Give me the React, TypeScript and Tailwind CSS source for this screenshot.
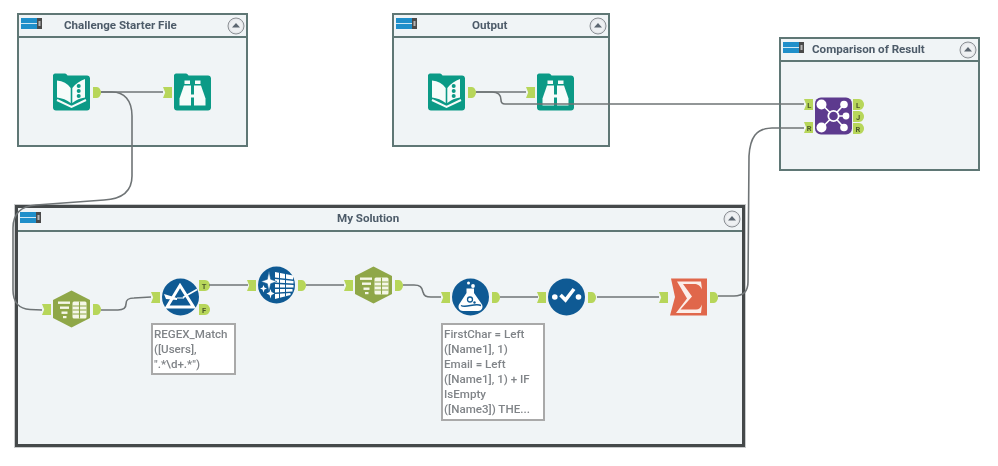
import React from "react";

const FONT = { fontFamily: 'Roboto, "Open Sans", sans-serif' };

function HeaderIcon() {
  return (
    <svg width="22" height="12" viewBox="0 0 22 12" className="shrink-0 mb-[3px]">
      <rect x="0" y="0" width="16" height="11" fill="#1f8fca" />
      <rect x="0" y="5" width="16" height="1" fill="#cfe8f5" />
      <rect x="16" y="0" width="5" height="11" fill="#4a4a4a" />
      <rect x="17.5" y="3" width="2" height="5" fill="#b5b5b5" />
    </svg>
  );
}

function CollapseButton() {
  return (
    <svg width="18" height="18" viewBox="0 0 18 18" className="shrink-0">
      <circle cx="9" cy="9" r="8" fill="#e3e5e8" stroke="#8b8f94" strokeWidth="1" />
      <circle cx="9" cy="9" r="6.5" fill="#eef0f2" />
      <path d="M9 6 L13 10.5 H5 Z" fill="#5c6670" />
    </svg>
  );
}

function Container({
  className,
  titleClass,
  title,
  headerClass,
}: {
  className: string;
  titleClass: string;
  title: string;
  headerClass: string;
}) {
  return (
    <section className={`absolute bg-[#f0f4f6] ${className}`}>
      <header className={`flex items-center pl-[2px] pr-[1px] border-b-2 border-[#5f7775] ${headerClass}`}>
        <HeaderIcon />
        <h2 className={`text-[11.6px] font-bold text-[#4d5b69] leading-none whitespace-nowrap ${titleClass}`}>{title}</h2>
        <span className="ml-auto flex">
          <CollapseButton />
        </span>
      </header>
    </section>
  );
}

function InPort({ label }: { label?: string }) {
  return (
    <svg width="9" height="11" viewBox="0 0 9 11" className="shrink-0">
      <path d="M0 0 H9 V11 H0 L2.2 5.5 Z" fill="#b7d65a" />
      {label && (
        <text x="5.2" y="8.5" fontSize="7.5" fontWeight="700" textAnchor="middle" fill="#4c5a2a" style={FONT}>
          {label}
        </text>
      )}
    </svg>
  );
}

function OutPort({ label, wide }: { label?: string; wide?: boolean }) {
  return (
    <svg width={wide ? 11 : 8} height="11" viewBox={wide ? "0 0 11 11" : "0 0 8 11"} className="shrink-0">
      <path d={wide ? "M0 0 H6 C9 0 11 3 11 5.5 C11 8 9 11 6 11 H0 Z" : "M0 0 H4 C6 0 8 3 8 5.5 C8 8 6 11 4 11 H0 Z"} fill="#b7d65a" />
      {label && (
        <text x="5" y="8.5" fontSize="7.5" fontWeight="700" textAnchor="middle" fill="#4c5a2a" style={FONT}>
          {label}
        </text>
      )}
    </svg>
  );
}

function Node({
  x,
  y,
  ins,
  outs,
  insClass = "",
  outsClass = "ml-[3px]",
  children,
}: {
  x: number;
  y: number;
  ins?: React.ReactNode;
  outs?: React.ReactNode;
  insClass?: string;
  outsClass?: string;
  children: React.ReactNode;
}) {
  return (
    <div className="absolute flex items-center" style={{ left: x, top: y }}>
      {ins !== undefined && <div className={`flex flex-col mr-[2px] ${insClass}`}>{ins}</div>}
      <svg width="37" height="38" viewBox="0 0 37 37" className="shrink-0">
        {children}
      </svg>
      {outs !== undefined && <div className={`flex flex-col ${outsClass}`}>{outs}</div>}
    </div>
  );
}

const FolderBg = () => (
  <path
    d="M2 0 H12 C13 0 14 1 14.5 2 H34 C35.7 2 37 3.3 37 5 V34 C37 35.7 35.7 37 34 37 H3 C1.3 37 0 35.7 0 34 V2 C0 1 1 0 2 0 Z"
    fill="#0b9a86"
  />
);

function BookIcon() {
  return (
    <>
      <FolderBg />
      <path d="M4 7 C10 7.5 14.5 10 17.7 14.5 V29.5 C14 26.5 9 24.5 4 24 Z" fill="#f6fcfa" />
      <path d="M19.3 14.5 C22.5 10 27.5 7 32 5.5 V24 C27.5 24.5 23 26.5 19.3 29.5 Z" fill="#f6fcfa" />
      <circle cx="25.7" cy="12.5" r="2" fill="#0b9a86" />
      <circle cx="25.7" cy="17.5" r="2" fill="#0b9a86" />
      <circle cx="25.7" cy="22.5" r="2" fill="#0b9a86" />
      <path d="M4 26.5 L18.5 33.5 L33 26.5" fill="none" stroke="#f6fcfa" strokeWidth="2" />
    </>
  );
}

function BinocularIcon() {
  return (
    <>
      <FolderBg />
      <rect x="10.5" y="7" width="5.5" height="3.5" fill="#f6fcfa" />
      <rect x="21" y="7" width="5.5" height="3.5" fill="#f6fcfa" />
      <path d="M10 12 H17 V32 H5.5 V25 Z" fill="#f6fcfa" />
      <path d="M20 12 H27 L31.5 25 V32 H20 Z" fill="#f6fcfa" />
      <rect x="16.5" y="21" width="4" height="3" fill="#f6fcfa" />
    </>
  );
}

function HexIcon() {
  return (
    <>
      <polygon points="18.5,0 37,9.5 37,27.5 18.5,37 0,27.5 0,9.5" fill="#8fa748" />
      <rect x="5" y="11" width="12" height="2.4" fill="#f5f7e8" />
      <rect x="7" y="16" width="9" height="2.4" fill="#f5f7e8" />
      <rect x="8.5" y="21" width="6" height="2.4" fill="#f5f7e8" />
      <rect x="10" y="25.5" width="3.5" height="2.2" fill="#f5f7e8" />
      <rect x="19.5" y="11" width="14" height="17" rx="1.5" fill="#f5f7e8" />
      <path d="M26.5 11 V28 M19.5 15.5 H33.5 M19.5 19.5 H33.5 M19.5 23.5 H33.5" stroke="#8fa748" strokeWidth="1.1" />
    </>
  );
}

function FilterIcon() {
  return (
    <>
      <circle cx="18.5" cy="18.5" r="18.5" fill="#0f5a94" />
      <path d="M18 7 L31.5 28.5 H5 Z" fill="none" stroke="#fff" strokeWidth="3" />
      <path d="M2 15.5 L15 19.5 V21.5 L4 20.5 Z" fill="#fff" />
      <path d="M15 19.5 H22" stroke="#fff" strokeWidth="1" />
      <path d="M21 19 L35 11" stroke="#fff" strokeWidth="1.6" />
    </>
  );
}

function StarTableIcon() {
  return (
    <>
      <circle cx="18.5" cy="18.5" r="18.5" fill="#0f5a94" />
      <path d="M17 5.5 L35 9 V13 L17 11 Z M17 12.5 L35.5 14.5 V17 L17 16 Z M17 17.5 L35.5 18.5 V21 L17 21 Z M17 22.5 L34.5 22.5 V25 L17 26 Z M17 27.5 L32.5 26.5 V28.5 L17 32.5 Z" fill="#fff" />
      <path d="M21.5 6 V32 M27.5 7 V30" stroke="#0f5a94" strokeWidth="1" />
      <path d="M11 4.5 L12.7 12.8 L19 15 L12.7 17.2 L11 25 L9.3 17.2 L3 15 L9.3 12.8 Z" fill="#fff" stroke="#0f5a94" strokeWidth="0.6" />
      <path d="M5.5 18.5 L6.5 21 L9 22 L6.5 23 L5.5 26 L4.5 23 L2 22 L4.5 21 Z" fill="#fff" />
      <path d="M12.5 22.5 L13.5 25.5 L16.5 27 L13.5 28.5 L12.5 32 L11.5 28.5 L8.5 27 L11.5 25.5 Z" fill="#fff" />
    </>
  );
}

function FlaskIcon() {
  return (
    <>
      <circle cx="18.5" cy="18.5" r="18.5" fill="#0f5a94" />
      <circle cx="16.5" cy="4.5" r="1.5" fill="#fff" />
      <circle cx="21" cy="7.5" r="1.9" fill="#fff" />
      <path d="M14.5 10 H22 V14.5 L30 26 C31.5 29 29.5 32.5 26 32.5 H11 C7.5 32.5 5.5 29 7 26 L14.5 14.5 Z" fill="#fff" />
      <path d="M9 27 C14 30 23 24 29 27" fill="none" stroke="#0f5a94" strokeWidth="1.4" />
      <circle cx="18" cy="21" r="2.5" fill="none" stroke="#0f5a94" strokeWidth="1.3" />
      <circle cx="22.5" cy="24" r="1.2" fill="#0f5a94" />
    </>
  );
}

function CheckIcon() {
  return (
    <>
      <circle cx="18.5" cy="18.5" r="18.5" fill="#0f5a94" />
      <circle cx="6.8" cy="18.5" r="2.8" fill="#fff" />
      <circle cx="30.5" cy="18.5" r="2.8" fill="#fff" />
      <path d="M12.5 16.5 L17.5 21.5 L26 10.5" fill="none" stroke="#fff" strokeWidth="3.6" />
    </>
  );
}

function SigmaIcon() {
  return (
    <>
      <polygon points="1,0 37,0 37,37 0,37 5,18.5" fill="#e0674b" />
      <path d="M7 3 H31 L32 11 C30 7 28 5.5 24 5.5 H13 L22 18 L10.5 31 H26 C29 31 31 29 32 26 L31 34.5 H6 L17 20 Z" fill="#fbeee9" />
    </>
  );
}

function JoinIcon() {
  return (
    <>
      <rect x="0" y="0" width="37" height="37" rx="6" fill="#5d3a8e" />
      <path d="M18.5 18.5 L7 7 M18.5 18.5 L29 7 M18.5 18.5 L31 18.5 M18.5 18.5 L7 30 M18.5 18.5 L29 30" stroke="#fff" strokeWidth="1.6" />
      <circle cx="18.5" cy="18.5" r="5.2" fill="#5d3a8e" stroke="#fff" strokeWidth="1.8" />
      <circle cx="6.5" cy="7" r="5" fill="#fff" />
      <circle cx="6.5" cy="30" r="5" fill="#fff" />
      <circle cx="29" cy="7" r="3.8" fill="#fff" />
      <circle cx="31" cy="18.5" r="3.4" fill="#fff" />
      <circle cx="29" cy="30" r="3.8" fill="#fff" />
    </>
  );
}

function Note({ className, lines }: { className: string; lines: string[] }) {
  return (
    <div className={`absolute bg-white border-2 border-[#a9a9a9] px-[1px] pt-[2px] text-[11.6px] leading-[15px] font-medium text-[#808488] whitespace-nowrap ${className}`}>
      {lines.map((l) => (
        <div key={l}>{l}</div>
      ))}
    </div>
  );
}

const WIRES = [
  "M101 92 H163",
  "M101 92 H112 C124 92 132 100 132 116 V176 C132 192 122 199 104 200 L36 205 C22 206 13 212 13 228 V290 C13 302 19 309 30 309.5 L42 310",
  "M476 92 H526",
  "M476 92 H492 C498 92 501 95 501 100 C501 103 502 104 505 104 H804",
  "M718 296 H734 C743 296 748 292 748 282 L749 156 C750 138 756 128 772 128 H804",
  "M101 310 H118 C124 310 126 308 126 304 C126 299 129 298 134 298 L151 297",
  "M209 285 L248 285",
  "M306 285 H344",
  "M403 285 H414 C420 285 422 287 423 292 C424 296 426 297 431 297 H441",
  "M500 297 H538",
  "M597 297 H659",
];

export default function App() {
  return (
    <main className="relative w-[998px] h-[466px] bg-white overflow-hidden blur-[0.35px]" style={FONT}>
      <Container
        className="left-[17px] top-[13px] w-[231px] h-[134px] border-2 border-[#5f7775]"
        headerClass="h-[23px]"
        titleClass="ml-[21px]"
        title="Challenge Starter File"
      />
      <Container
        className="left-[392px] top-[13px] w-[218px] h-[134px] border-2 border-[#5f7775]"
        headerClass="h-[23px]"
        titleClass="ml-[54px]"
        title="Output"
      />
      <Container
        className="left-[779px] top-[37px] w-[201px] h-[134px] border-2 border-[#5f7775]"
        headerClass="h-[23px]"
        titleClass="ml-[7px]"
        title="Comparison of Result"
      />
      <Container
        className="left-[15px] top-[205px] w-[730px] h-[242px] border-[3px] border-[#45494a] shadow-[0_0_0_1px_#c9cbcc]"
        headerClass="h-[24px]"
        titleClass="ml-[295px]"
        title="My Solution"
      />

      <Node x={163} y={73} ins={<InPort />}><BinocularIcon /></Node>
      <Node x={53} y={73} outs={<OutPort />}><BookIcon /></Node>

      <Node x={526} y={73} ins={<InPort />}><BinocularIcon /></Node>
      <Node x={428} y={73} outs={<OutPort />}><BookIcon /></Node>

      <Node
        x={804}
        y={97}
        insClass="gap-[12px]"
        outsClass="ml-[1px] gap-[1px]"
        ins={<><InPort label="L" /><InPort label="R" /></>}
        outs={<><OutPort label="L" wide /><OutPort label="J" wide /><OutPort label="R" wide /></>}
      >
        <JoinIcon />
      </Node>

      <Node x={42} y={290} ins={<InPort />} outs={<OutPort />}><HexIcon /></Node>
      <Node
        x={151}
        y={278}
        outsClass="gap-[13px]"
        ins={<InPort />}
        outs={<><OutPort label="T" wide /><OutPort label="F" wide /></>}
      >
        <FilterIcon />
      </Node>
      <Node x={247} y={266} ins={<InPort />} outs={<OutPort />}><StarTableIcon /></Node>
      <Node x={344} y={266} ins={<InPort />} outs={<OutPort />}><HexIcon /></Node>
      <Node x={441} y={278} ins={<InPort />} outs={<OutPort />}><FlaskIcon /></Node>
      <Node x={537} y={278} ins={<InPort />} outs={<OutPort />}><CheckIcon /></Node>
      <Node x={659} y={278} ins={<InPort />} outs={<OutPort />}><SigmaIcon /></Node>

      <svg className="absolute left-0 top-0 pointer-events-none" width="998" height="466" viewBox="0 0 998 466">
        {WIRES.map((d) => (
          <path key={d} d={d} fill="none" stroke="#6f7476" strokeWidth="1.6" />
        ))}
      </svg>

      <Note
        className="left-[151px] top-[323px] w-[85px] h-[52px]"
        lines={["REGEX_Match", "([Users],", '".*\\d+.*")']}
      />
      <Note
        className="left-[441px] top-[323px] w-[104px] h-[98px]"
        lines={["FirstChar = Left", "([Name1], 1)", "Email = Left", "([Name1], 1) + IF", "IsEmpty", "([Name3]) THE..."]}
      />
    </main>
  );
}
